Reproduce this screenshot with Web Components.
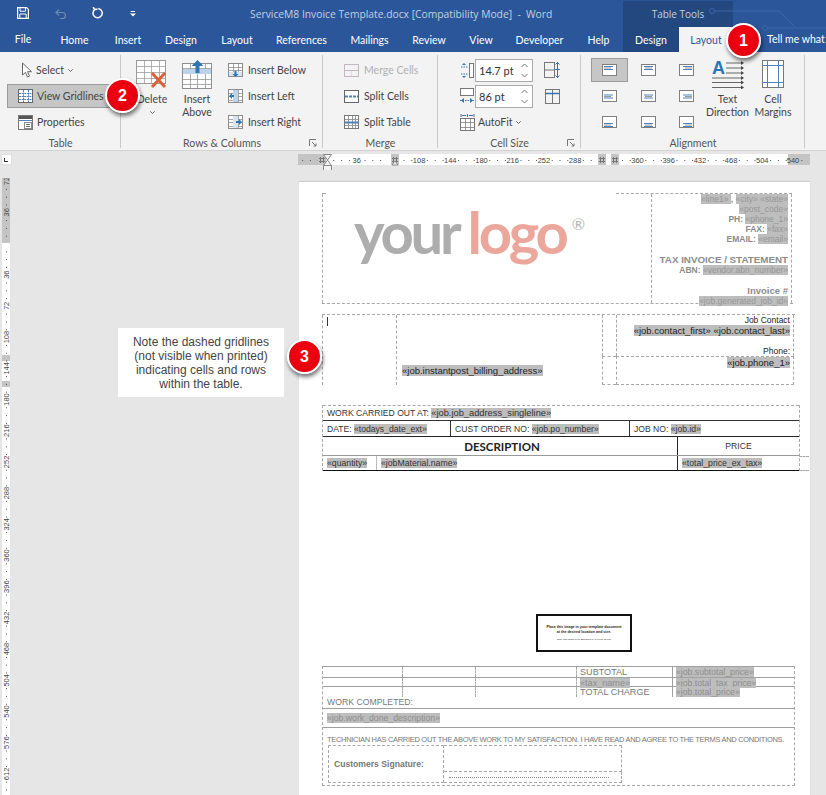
<!DOCTYPE html>
<html lang="en">
<head>
<meta charset="utf-8">
<title>ServiceM8 Invoice Template</title>
<style>
  html, body { margin: 0; height: 100%; overflow: hidden; background: #e6e6e6; }
  body { font-family: "Open Sans", "Liberation Sans", sans-serif; }
</style>
</head>
<body>
<word-app>
  <word-titlebar></word-titlebar>
  <word-tabs>
    <word-tab w="46" strong>File</word-tab>
    <word-tab w="57">Home</word-tab>
    <word-tab w="50">Insert</word-tab>
    <word-tab w="56">Design</word-tab>
    <word-tab w="56">Layout</word-tab>
    <word-tab w="73">References</word-tab>
    <word-tab w="63">Mailings</word-tab>
    <word-tab w="56">Review</word-tab>
    <word-tab w="48">View</word-tab>
    <word-tab w="69">Developer</word-tab>
    <word-tab w="49">Help</word-tab>
    <word-tab w="56" context>Design</word-tab>
    <word-tab w="54" active>Layout</word-tab>
  </word-tabs>

  <word-ribbon>
    <ribbon-group label="Table" w="120" pad="7">
      <ribbon-stack>
        <small-button icon="select" pad="14" label="Select" caret></small-button>
        <small-button icon="gridlines" pad="11" label="View Gridlines" pressed w="103"></small-button>
        <small-button icon="properties" pad="11" label="Properties"></small-button>
      </ribbon-stack>
    </ribbon-group>
    <ribbon-group label="Rows &amp; Columns" w="201" pad="10" launcher>
      <large-button icon="delete" w="42" caret>Delete</large-button>
      <large-button icon="insertAbove" w="42" style="margin-left:3px">Insert<br>Above</large-button>
      <ribbon-stack gap="8">
        <small-button icon="insertBelow" label="Insert Below" pad="2"></small-button>
        <small-button icon="insertLeft" label="Insert Left" pad="2"></small-button>
        <small-button icon="insertRight" label="Insert Right" pad="2"></small-button>
      </ribbon-stack>
    </ribbon-group>
    <ribbon-group label="Merge" w="114" pad="21">
      <ribbon-stack>
        <small-button icon="mergeCells" label="Merge Cells" disabled></small-button>
        <small-button icon="splitCells" label="Split Cells"></small-button>
        <small-button icon="splitTable" label="Split Table"></small-button>
      </ribbon-stack>
    </ribbon-group>
    <ribbon-group label="Cell Size" w="142" pad="22" launcher>
      <cell-size-panel></cell-size-panel>
    </ribbon-group>
    <ribbon-group label="Alignment" w="223" pad="10">
      <align-grid></align-grid>
      <large-button icon="textDirection" w="43" style="margin-left:1px">Text<br>Direction</large-button>
      <large-button icon="cellMargins" w="44" style="margin-left:2px">Cell<br>Margins</large-button>
    </ribbon-group>
  </word-ribbon>

  <word-rulerbar></word-rulerbar>

  <word-workspace>
    <doc-page>
      <invoice-header></invoice-header>
      <invoice-contact></invoice-contact>
      <invoice-lines></invoice-lines>
      <signature-stamp></signature-stamp>
      <invoice-totals></invoice-totals>
    </doc-page>
    <note-box>Note the dashed gridlines<br>(not visible when printed)<br>indicating cells and rows<br>within the table.</note-box>
  </word-workspace>

  <step-badge style="--x:726px;--y:23px">1</step-badge>
  <step-badge style="--x:105px;--y:78px">2</step-badge>
  <step-badge style="--x:287px;--y:339px">3</step-badge>
</word-app>

<script>
const BLUE = '#4f81bd';
const GREY = '#8c8c8c';

// grid of thin lines, used by most of the table icons
function tableLines (x, y, w, h, cols, rows, colour = GREY) {
  let out = `<rect x="${x + .5}" y="${y + .5}" width="${w - 1}" height="${h - 1}" fill="#fff" stroke="${colour}"/>`;
  for (let i = 1; i < cols; i++) {
    const cx = Math.round(x + w * i / cols) + .5;
    out += `<path d="M${cx} ${y}V${y + h}" stroke="${colour}" opacity=".75"/>`;
  }
  for (let i = 1; i < rows; i++) {
    const cy = Math.round(y + h * i / rows) + .5;
    out += `<path d="M${x} ${cy}H${x + w}" stroke="${colour}" opacity=".75"/>`;
  }
  return out;
}

const ICONS = {
  select: [11, 16, `<path d="M1.5 1v12l3-2.6 2 4.6 2-.9-2-4.4h4z" fill="#fff" stroke="#666"/>`],
  gridlines: [15, 14, `<rect x=".5" y=".5" width="14" height="13" fill="#fff" stroke="#666"/>
    <path d="M5.5 1v12M10.5 1v12M1 4.5h13M1 7.5h13M1 10.5h13" stroke="${BLUE}" stroke-dasharray="2 .6"/>`],
  properties: [15, 15, `<rect x=".5" y=".5" width="14" height="14" fill="#fff" stroke="#777"/>
    <rect x="1" y="1" width="13" height="3" fill="#555"/><path d="M1 5.5h13" stroke="${BLUE}"/>
    <rect x="6.5" y="7.5" width="7" height="6" fill="#fff" stroke="#888"/><path d="M8 9.5h4M8 11.5h4" stroke="#666"/>`],
  delete: [32, 32, tableLines(0, 0, 30, 24, 4, 4, '#9a9a9a') +
    `<path d="M16 13l13 14M29 13L16 27" stroke="#d9603b" stroke-width="3" fill="none"/>`],
  insertAbove: [31, 29, `<g transform="translate(0 3)">${tableLines(0, 0, 30, 26, 4, 5, '#8f8f8f')}
    <rect x="1" y="6" width="28" height="5" fill="#bcd3ea"/></g>
    <path d="M15.5 0l6 6h-4v7h-4V6h-4z" fill="#2e75b6"/>`],
  insertBelow: [16, 15, tableLines(0, 0, 15, 14, 3, 4) +
    `<rect x="1" y="9" width="13" height="4" fill="#d5e3f2"/><path d="M6.5 8h2v3h2l-3 3-3-3h2z" fill="#2e75b6"/>`],
  insertLeft: [16, 15, tableLines(0, 0, 15, 14, 3, 4) +
    `<rect x="5" y="1" width="5" height="12" fill="#bcd3ea"/><path d="M1 7l3-3v2h2v2H4v2z" fill="#2e75b6"/>`],
  insertRight: [16, 15, tableLines(0, 0, 15, 14, 3, 4) +
    `<rect x="5" y="1" width="5" height="12" fill="#d5e3f2"/><path d="M14 7l-3-3v2H8v2h3v2z" fill="#2e75b6"/>`],
  mergeCells: [16, 13, `<rect x=".5" y=".5" width="14" height="12" fill="none" stroke="#c4b7bf"/><path d="M1 6.5h13" stroke="#c4b7bf"/><path d="M7.5 7v5" stroke="#e1dbe0"/>`],
  splitCells: [16, 13, `<rect x=".5" y=".5" width="14" height="12" fill="#fff" stroke="#666"/><path d="M1 6.5h13" stroke="${BLUE}" stroke-width="2" stroke-dasharray="3 1"/>`],
  splitTable: [16, 14, tableLines(0, 0, 15, 14, 4, 1, '#777') +
    `<path d="M1 4.5h13" stroke="#999"/><path d="M1 7.5h13" stroke="${BLUE}" stroke-width="2"/><path d="M1 10.5h13" stroke="#999"/>`],
  cellHeight: [14, 17, `<rect x="9.5" y="1.5" width="4" height="14" fill="#fff" stroke="#777"/>
    <path d="M1 5h7M1 12h7" stroke="#2e75b6" stroke-dasharray="1.5 1"/><path d="M4 1l2 2H2zM4 16l2-2H2z" fill="#2e75b6"/>`],
  cellWidth: [14, 16, `<rect x=".5" y=".5" width="13" height="7" fill="#fff" stroke="#777"/>
    <path d="M0 12.5h14" stroke="#2e75b6" stroke-dasharray="1.5 1"/><path d="M1 12.5l3-2.5v5zM13 12.5l-3-2.5v5z" fill="#2e75b6"/>`],
  autoFit: [15, 18, `<g transform="translate(0 5)">${tableLines(0, 0, 15, 13, 3, 3, '#777')}</g>
    <path d="M1 1v3M7.5 1v3M14 1v3" stroke="#666"/><path d="M2 2.5h4M9 2.5h4" stroke="#2e75b6"/>`],
  distRows: [16, 16, `<rect x=".5" y=".5" width="10" height="15" fill="none" stroke="#777"/><path d="M1 8h9" stroke="#777"/>
    <path d="M13.5 0v16M11.5 2.5l2-2 2 2M11.5 13.5l2 2 2-2M11 7.5h5" stroke="#2e75b6" fill="none"/>`],
  distCols: [15, 15, `<rect x=".5" y=".5" width="14" height="14" fill="none" stroke="#777"/><path d="M7.5 1v13" stroke="#777"/><path d="M1 4.5h13" stroke="#2e75b6" stroke-width="1.5"/>`],
  textDirection: [32, 29, `<text x="0" y="14" font-family="Liberation Sans,sans-serif" font-weight="700" font-size="18" fill="#2e75b6">A</text>
    <path d="M14 3h16M14 8h16M14 13h16M0 18h30M0 22.500h30M0 27.500h30" stroke="#666" fill="none"/>
    <path d="M32 3l-3-2v4zM32 8l-3-2v4zM32 13l-3-2v4zM32 18l-3-2v4zM32 22.500l-3-2v4zM32 27.500l-3-2v4z" fill="#444"/>`],
  cellMargins: [22, 28, `<rect x=".5" y=".5" width="21" height="27" fill="#fff" stroke="#777"/>
    <path d="M5.500 1v26M16.500 1v26M1 5.500h20M1 22.500h20" stroke="${BLUE}"/>`]
};

function iconSvg (name) {
  const [w, h, body] = ICONS[name];
  return `<svg width="${w}" height="${h}" viewBox="0 0 ${w} ${h}" style="display:block;flex:none" aria-hidden="true">${body}</svg>`;
}

class WordApp extends HTMLElement {
  constructor () {
    super();
    this.attachShadow({ mode: 'open' });
    this.shadowRoot.innerHTML = `
      <style>
        :host { display: flex; flex-direction: column; position: relative; width: 826px; height: 795px; overflow: hidden; }
      </style>
      <slot></slot>
    `;
  }
}

class WordTitlebar extends HTMLElement {
  constructor () {
    super();
    this.attachShadow({ mode: 'open' });
    this.shadowRoot.innerHTML = `
      <style>
        :host { display: flex; height: 27px; background: #2b579a; color: #c3cfe2; font-size: 10.300px; position: relative; }
        .qat { display: flex; width: 250px; flex: none; align-items: center; padding-left: 17px; box-sizing: border-box; padding-bottom: 1px; }
        .title { width: 373px; flex: none; line-height: 28px; white-space: pre; }
        .tools { width: 110px; flex: none; margin-top: 1px; background: #23477f; text-align: center; line-height: 26px; font-size: 10px; }
        svg.circuit { position: absolute; left: 705px; top: 0; }
      </style>
      <div class="qat">
        <svg width="12" height="12" viewBox="0 0 12 12" fill="none" stroke="#fff" stroke-width="1.200"><path d="M.6.6h9l1.800 1.800v9H.6z"/><path d="M3 .8v3.400h5.500V.8M2.800 11.200V7h6.400v4.200" stroke-width="1"/></svg>
        <svg style="margin-left:26px" width="12" height="11" viewBox="0 0 12 11" fill="none" stroke="#6e8ab8" stroke-width="1.200"><path d="M1.500 4.500h6a3 3 0 010 6H5M4 1.500l-3 3 3 3"/></svg>
        <svg style="margin-left:25px" width="12" height="12" viewBox="0 0 12 12" fill="none" stroke="#fff" stroke-width="1.500"><path d="M7 1.800a4.600 4.600 0 11-4 .6M1.500 .5l1 2.200 2.200-.6" stroke-linecap="square"/></svg>
        <svg style="margin-left:26px" width="6" height="7" viewBox="0 0 6 7"><path d="M.5 1.500h4.500" stroke="#fff"/><path d="M0 3.500h6L3 6.500z" fill="#fff"/></svg>
      </div>
      <div class="title">ServiceM8 Invoice Template.docx [Compatibility Mode]  -  Word</div>
      <div class="tools">Table Tools</div>
      <svg class="circuit" width="121" height="52" viewBox="0 0 121 52" fill="none" stroke="#3d66a6">
        <circle cx="7" cy="11" r="2.500"/><path d="M10 11h64M74 11l16 16"/>
        <circle cx="60" cy="28" r="2.500"/><path d="M63 28h58"/>
      </svg>
    `;
  }
}

class WordTabs extends HTMLElement {
  constructor () {
    super();
    this.attachShadow({ mode: 'open' });
    this.shadowRoot.innerHTML = `
      <style>
        :host { display: flex; height: 25px; background: #2b579a; overflow: hidden; font-family: Lato, "Open Sans", sans-serif; font-size: 10.500px; }
        .tell { padding-left: 34px; color: #fff; line-height: 24px; white-space: nowrap; }
      </style>
      <slot></slot>
      <div class="tell">Tell me what you want</div>
    `;
  }
}

class WordTab extends HTMLElement {
  constructor () {
    super();
    this.attachShadow({ mode: 'open' });
    this.shadowRoot.innerHTML = `
      <style>
        :host { display: block; flex: none; box-sizing: border-box; text-align: center; color: #fff; line-height: 26px; }
        :host([context]) { background: #23477f; }
        :host([active]) { background: #f3f3f3; color: #2b579a; }
        :host([strong]) { line-height: 24px; }
      </style>
      <slot></slot>
    `;
  }
  connectedCallback () {
    this.style.width = this.getAttribute('w') + 'px';
  }
}

class WordRibbon extends HTMLElement {
  constructor () {
    super();
    this.attachShadow({ mode: 'open' });
    this.shadowRoot.innerHTML = `
      <style>
        :host { display: flex; height: 98px; background: #f3f3f3; border-bottom: 1px solid #d2d2d2; color: #444; font-family: Lato, "Open Sans", sans-serif; font-size: 10.500px; }
      </style>
      <slot></slot>
    `;
  }
}

class RibbonGroup extends HTMLElement {
  constructor () {
    super();
    this.attachShadow({ mode: 'open' });
    this.shadowRoot.innerHTML = `
      <style>
        :host { display: flex; flex-direction: column; flex: none; position: relative; box-sizing: border-box; }
        :host::after { content: ""; position: absolute; right: 0; top: 3px; bottom: 2px; width: 1px; background: #c9c9c9; }
        .body { display: flex; flex: 1; padding-top: 6px; box-sizing: border-box; min-height: 0; }
        .label { height: 15px; line-height: 17px; text-align: center; position: relative; color: #555; }
        .launcher { position: absolute; right: 6px; top: 4px; }
      </style>
      <div class="body"><slot></slot></div>
      <div class="label"></div>
    `;
  }
  connectedCallback () {
    this.style.width = (+this.getAttribute('w') + 1) + 'px';
    this.shadowRoot.querySelector('.body').style.paddingLeft = this.getAttribute('pad') + 'px';
    const label = this.shadowRoot.querySelector('.label');
    label.textContent = this.getAttribute('label');
    if (this.hasAttribute('launcher')) {
      label.insertAdjacentHTML('beforeend', `<svg class="launcher" width="8" height="8" viewBox="0 0 8 8" fill="none" stroke="#777"><path d="M.5 7V.5H7"/><path d="M3 3l4 4M7 4.500V7H4.500"/></svg>`);
    }
  }
}

class RibbonStack extends HTMLElement {
  constructor () {
    super();
    this.attachShadow({ mode: 'open' });
    this.shadowRoot.innerHTML = `
      <style>
        :host { display: flex; flex-direction: column; gap: 2px; flex: none; }
      </style>
      <slot></slot>
    `;
  }
  connectedCallback () {
    if (this.hasAttribute('gap')) this.style.marginLeft = this.getAttribute('gap') + 'px';
  }
}

class SmallButton extends HTMLElement {
  constructor () {
    super();
    this.attachShadow({ mode: 'open' });
    this.shadowRoot.innerHTML = `
      <style>
        :host { display: flex; align-items: center; height: 24px; box-sizing: border-box; white-space: nowrap; }
        :host([pressed]) { background: #c6c6c6; box-shadow: inset 0 0 0 1px #9b9b9b; }
        :host([disabled]) { color: #b1b1b1; }
        .icon { flex: none; margin-right: 4px; }
        .wrap { display: flex; align-items: center; }
        .caret { margin-left: 4px; }
      </style>
      <div class="wrap"><span class="icon"></span><span class="text"></span></div>
    `;
  }
  connectedCallback () {
    const root = this.shadowRoot;
    root.querySelector('.icon').innerHTML = iconSvg(this.getAttribute('icon'));
    root.querySelector('.text').textContent = this.getAttribute('label');
    root.querySelector('.wrap').style.paddingLeft = (this.getAttribute('pad') || 0) + 'px';
    if (this.hasAttribute('w')) this.style.width = this.getAttribute('w') + 'px';
    if (this.hasAttribute('caret')) {
      root.querySelector('.wrap').insertAdjacentHTML('beforeend', `<svg class="caret" width="5" height="3" viewBox="0 0 5 3" fill="none" stroke="#666"><path d="M.3.3l2.200 2.200L4.700.3"/></svg>`);
    }
  }
}

class LargeButton extends HTMLElement {
  constructor () {
    super();
    this.attachShadow({ mode: 'open' });
    this.shadowRoot.innerHTML = `
      <style>
        :host { display: flex; flex-direction: column; align-items: center; flex: none; text-align: center; line-height: 13px; }
        .icon { height: 35px; padding-top: 2px; box-sizing: border-box; }
        .caret { margin-top: 5px; }
      </style>
      <div class="icon"></div>
      <div><slot></slot></div>
    `;
  }
  connectedCallback () {
    const root = this.shadowRoot;
    root.querySelector('.icon').innerHTML = iconSvg(this.getAttribute('icon'));
    this.style.width = this.getAttribute('w') + 'px';
    if (this.hasAttribute('caret')) {
      root.querySelector('div:last-of-type').insertAdjacentHTML('afterend', `<svg class="caret" width="5" height="3" viewBox="0 0 5 3" fill="none" stroke="#666"><path d="M.3.3l2.200 2.200L4.700.3"/></svg>`);
    }
  }
}

class CellSizePanel extends HTMLElement {
  constructor () {
    super();
    this.attachShadow({ mode: 'open' });
    const spin = value => `
      <div class="spin"><span>${value}</span>
        <svg width="7" height="15" viewBox="0 0 7 15" fill="none" stroke="#777"><path d="M.5 4l3-3 3 3M.5 11l3 3 3-3"/></svg>
      </div>`;
    this.shadowRoot.innerHTML = `
      <style>
        :host { display: grid; grid-template-columns: 15px 58px 27px; grid-auto-rows: 24px; row-gap: 2px; align-items: center; }
        .spin { display: flex; align-items: center; justify-content: space-between; height: 23px; box-sizing: border-box; padding: 0 4px 0 3px; background: #fff; border: 1px solid #ababab; font-size: 11px; color: #333; }
        .dist { justify-self: end; }
        .auto { grid-column: 1 / 4; display: flex; align-items: center; gap: 3px; }
      </style>
      <div>${iconSvg('cellHeight')}</div>${spin('14.7 pt')}<div class="dist">${iconSvg('distRows')}</div>
      <div>${iconSvg('cellWidth')}</div>${spin('86 pt')}<div class="dist">${iconSvg('distCols')}</div>
      <div class="auto">${iconSvg('autoFit')}<span>AutoFit</span>
        <svg width="5" height="3" viewBox="0 0 5 3" fill="none" stroke="#666"><path d="M.3.3l2.200 2.200L4.700.3"/></svg>
      </div>
    `;
  }
}

class AlignGrid extends HTMLElement {
  constructor () {
    super();
    this.attachShadow({ mode: 'open' });
    let cells = '';
    for (let row = 0; row < 3; row++) {
      for (let col = 0; col < 3; col++) {
        cells += `<div class="cell${row + col === 0 ? ' on' : ''}">${this.glyph(row, col)}</div>`;
      }
    }
    this.shadowRoot.innerHTML = `
      <style>
        :host { display: grid; grid-template-columns: repeat(3, 37px); grid-auto-rows: 24px; column-gap: 1.5px; row-gap: 2px; flex: none; }
        .cell { display: flex; align-items: center; justify-content: center; box-sizing: border-box; }
        .on { background: #c6c6c6; border: 1px solid #9b9b9b; }
      </style>
      ${cells}
    `;
  }
  glyph (row, col) {
    const y = [2, 4.5, 7][row];
    const widths = [9, 7, 9];
    let lines = '';
    widths.forEach((w, i) => {
      const x = col === 0 ? 2 : col === 1 ? (15 - w) / 2 : 13 - w;
      lines += `<rect x="${x}" y="${y + i * 1.500}" width="${w}" height="1" fill="${i === 1 ? '#9a9a9a' : BLUE}"/>`;
    });
    return `<svg width="15" height="12" viewBox="0 0 15 12" style="display:block"><rect x=".5" y=".5" width="14" height="11" fill="#fff" stroke="#7f7f7f"/>${lines}</svg>`;
  }
}

class WordRulerbar extends HTMLElement {
  constructor () {
    super();
    this.attachShadow({ mode: 'open' });
    let marks = '';
    // four small dots per 36pt label, same pitch as the page scale
    for (let i = -3; i < 62; i++) {
      const x = 27.500 + i * 7.800;
      if (i % 4 === 0) {
        if (i > 0 && i !== 8 && i !== 36 && i !== 60) {
          marks += `<text x="${x}" y="8.500" text-anchor="middle">${i * 9}</text>`;
        }
      } else {
        marks += `<rect x="${x}" y="6" width="1" height="1" fill="#555"/>`;
      }
    }
    const hatch = x => `<rect x="${x}" y="0" width="8" height="11" fill="#c4c4c4"/><path d="M${x + 2.500} 3v6M${x + 5.500} 3v6M${x + 1} 4.500h6M${x + 1} 7.500h6" stroke="#777"/>`;
    this.shadowRoot.innerHTML = `
      <style>
        :host { display: flex; height: 19px; background: #e6e6e6; flex: none; }
        .corner { width: 9px; height: 9px; margin: 4px 0 0 2px; background: #fff; box-shadow: 0 0 0 1px #e0e0e0; position: relative; }
        .corner::after { content: ""; position: absolute; left: 2px; top: 3px; width: 3px; height: 3px; border: solid #333; border-width: 0 0 1px 1px; }
        svg { margin: 3px 0 0 287px; overflow: visible; font: 7.500px "Liberation Sans", sans-serif; fill: #444; }
      </style>
      <div class="corner"></div>
      <svg width="514" height="16" viewBox="0 0 514 16">
        <rect x="0" y="0" width="512" height="11" fill="#fff"/>
        <rect x="0" y="0" width="27" height="11" fill="#c4c4c4"/>
        <rect x="490" y="0" width="22" height="11" fill="#c4c4c4"/>
        ${marks}
        <text x="495" y="8.500" text-anchor="middle">540</text>
        ${hatch(20)}${hatch(93)}${hatch(300)}${hatch(313)}
        <path d="M25.500 .5h8l-4 5.500zM25.500 11.500h8l-4-5.500z" fill="#f3f3f3" stroke="#888"/>
        <rect x="25.500" y="11.500" width="8" height="5" fill="#f3f3f3" stroke="#888"/>
        <path d="M94 11h6l-3-4z" fill="#f3f3f3" stroke="#888"/>
      </svg>
    `;
  }
}

class WordWorkspace extends HTMLElement {
  constructor () {
    super();
    this.attachShadow({ mode: 'open' });
    let marks = '';
    for (let k = -2; k <= 17; k++) {
      const y = 65.500 + 31.200 * k;
      if (k !== 0) {
        marks += `<text transform="translate(8 ${y}) rotate(-90)" text-anchor="middle">${Math.abs(k) * 36}</text>`;
      }
      for (let d = 1; d < 4; d++) {
        marks += `<rect x="5" y="${y + d * 7.800}" width="1" height="1" fill="#555"/>`;
      }
    }
    this.shadowRoot.innerHTML = `
      <style>
        :host { display: flex; flex: 1; min-height: 0; position: relative; background: #e6e6e6; }
        .vruler { width: 299px; flex: none; }
        svg { display: block; margin: 8px 0 0 1px; font: 7.500px "Liberation Sans", sans-serif; fill: #444; }
      </style>
      <div class="vruler">
        <svg width="10" height="617" viewBox="0 0 10 617">
          <rect x="1" width="8" height="617" fill="#fff"/>
          <rect x="1" width="8" height="65" fill="#c4c4c4"/>
          <rect x="1" y="177" width="8" height="6" fill="#c4c4c4"/>
          <rect x="1" y="203" width="8" height="6" fill="#c4c4c4"/>
          ${marks}
        </svg>
      </div>
      <slot></slot>
    `;
  }
}

class DocPage extends HTMLElement {
  constructor () {
    super();
    this.attachShadow({ mode: 'open' });
    this.shadowRoot.innerHTML = `
      <style>
        :host { display: flex; flex-direction: column; width: 511px; margin-top: 11px; padding: 11px 0 0 23px; box-sizing: border-box; flex: none; background: #fff; border-top: 1px solid #cfcfcf; box-shadow: 0 0 1px #c8c8c8; font-family: "Liberation Sans", Arial, sans-serif; overflow: hidden; }
      </style>
      <slot></slot>
    `;
  }
}

class MergeField extends HTMLElement {
  constructor () {
    super();
    this.attachShadow({ mode: 'open' });
    this.shadowRoot.innerHTML = `
      <style>
        :host { background: #bdbdbd; font-weight: 400; }
      </style>
      <slot></slot>
    `;
  }
}

class InvoiceHeader extends HTMLElement {
  constructor () {
    super();
    this.attachShadow({ mode: 'open' });
    this.shadowRoot.innerHTML = `
      <style>
        :host { display: grid; grid-template-columns: 329px 141px; grid-template-rows: 1px 109px; width: 471px; flex: none; box-sizing: border-box; border-bottom: 1px dashed #a8a8a8; }
        .top { grid-column: 1 / 3; display: flex; }
        .dash { border-top: 1px dashed #a8a8a8; }
        .logo { box-sizing: border-box; border-left: 1px dashed #a8a8a8; padding: 9px 0 0 31px; font: 700 58px/58px Lato, "Open Sans", sans-serif; letter-spacing: -3.200px; white-space: nowrap; }
        .your { color: #adadad; }
        .brand { color: #eca79d; margin-left: 9px; }
        sup { font-size: 16px; font-weight: 400; color: #b5b5b5; vertical-align: 24px; line-height: 0; letter-spacing: 0; margin-left: 6px; }
        .info { border-left: 1px dashed #a8a8a8; border-right: 1px dashed #a8a8a8; text-align: right; padding-right: 3px; color: #8b8b8b; font-size: 8.500px; font-weight: 700; line-height: 10px; white-space: nowrap; }
        .big { font-size: 9.800px; line-height: 11px; }
        .gap { height: 10px; }
        .gap2 { height: 11px; }
        merge-field { color: #979797; }
      </style>
      <div class="top"><div class="dash" style="width:4px"></div><div class="dash" style="margin-left:290px;width:176px"></div></div>
      <div class="logo"><span class="your">your</span><span class="brand">logo</span><sup>®</sup></div>
      <div class="info">
        <div><merge-field>«line1»</merge-field>, <merge-field>«city»</merge-field> <merge-field>«state»</merge-field></div>
        <div><merge-field>«post_code»</merge-field></div>
        <div>PH: <merge-field>«phone_1»</merge-field></div>
        <div>FAX: <merge-field>«fax»</merge-field></div>
        <div>EMAIL: <merge-field>«email»</merge-field></div>
        <div class="gap"></div>
        <div class="big">TAX INVOICE / STATEMENT</div>
        <div>ABN: <merge-field>«vendor.abn_number»</merge-field></div>
        <div class="gap2"></div>
        <div class="big" style="font-size:9.500px;line-height:10px">Invoice #</div>
        <div><merge-field>«job.generated_job_id»</merge-field></div>
      </div>
    `;
  }
}

class InvoiceContact extends HTMLElement {
  constructor () {
    super();
    this.attachShadow({ mode: 'open' });
    this.shadowRoot.innerHTML = `
      <style>
        :host { display: grid; grid-template-columns: 74px 206px 14px 178px; grid-template-rows: 41px 29px; width: 473px; margin-top: 10px; flex: none; font-size: 9.500px; color: #222; border-top: 1px dashed #a8a8a8; white-space: nowrap; }
        .a, .b { grid-row: 1 / 3; border-left: 1px dashed #a8a8a8; }
        .a { padding: 2px 0 0 4px; }
        .caret { width: 1px; height: 9px; background: #333; }
        .b { display: flex; align-items: flex-end; padding: 0 0 9px 5px; }
        .c, .d, .e, .f { border-left: 1px dashed #a8a8a8; }
        .d, .f { border-right: 1px dashed #a8a8a8; text-align: right; padding-right: 3px; }
        .d { line-height: 10px; }
        .e, .f { border-top: 1px dashed #a8a8a8; border-bottom: 1px dashed #a8a8a8; }
        .f { line-height: 11px; }
        .small { font-size: 8.500px; }
      </style>
      <div class="a"><div class="caret"></div></div>
      <div class="b"><merge-field>«job.instantpost_billing_address»</merge-field></div>
      <div class="c"></div>
      <div class="d">
        <div class="small">Job Contact</div>
        <div style="line-height:12px"><merge-field>«job.contact_first»</merge-field> <merge-field>«job.contact_last»</merge-field></div>
        <div style="height:9px"></div>
        <div class="small">Phone:</div>
      </div>
      <div class="e"></div>
      <div class="f"><merge-field>«job.phone_1»</merge-field></div>
    `;
  }
}

class InvoiceLines extends HTMLElement {
  constructor () {
    super();
    this.attachShadow({ mode: 'open' });
    this.shadowRoot.innerHTML = `
      <style>
        :host { display: block; width: 478px; margin-top: 20px; flex: none; font-size: 8.600px; color: #333; white-space: nowrap; border-left: 1px dashed #a8a8a8; border-right: 1px dashed #a8a8a8; box-sizing: border-box; }
        .row { display: grid; align-items: center; box-sizing: border-box; }
        .row > div { padding-left: 4px; height: 100%; display: flex; align-items: center; box-sizing: border-box; }
        .r1 { height: 16px; border-top: 1px dashed #a8a8a8; border-bottom: 1px solid #333; }
        .r2 { height: 16px; grid-template-columns: 127px 179px 1fr; border-bottom: 1px solid #222; }
        .r2 > div + div { border-left: 1px solid #333; }
        .r3 { height: 19px; grid-template-columns: 354px 1fr; border-bottom: 1px solid #999; }
        .r3 > div + div { border-left: 1px solid #222; justify-content: center; padding-left: 0; }
        .desc { font: 700 11.500px Lato, "Open Sans", sans-serif; justify-content: center; color: #222; }
        .r4 { height: 15px; grid-template-columns: 53px 301px 1fr; border-bottom: 1px solid #111; font-size: 8.700px; position: relative; }
        .r4 > div + div { border-left: 1px solid #bbb; }
        .r4 > div:last-child { border-left-color: #222; }
        .r4::before, .r4::after { content: ""; position: absolute; left: 100%; width: 10px; border-top: 1px dashed #a8a8a8; }
        .r4::before { top: 0; }
        .r4::after { bottom: -1px; }
        .wide { font-size: 9.300px; }
      </style>
      <div class="row r1"><div>WORK CARRIED OUT AT:&nbsp;<merge-field class="wide">«job.job_address_singleline»</merge-field></div></div>
      <div class="row r2">
        <div>DATE:&nbsp;<merge-field>«todays_date_ext»</merge-field></div>
        <div>CUST ORDER NO:&nbsp;<merge-field>«job.po_number»</merge-field></div>
        <div>JOB NO:&nbsp;<merge-field>«job.id»</merge-field></div>
      </div>
      <div class="row r3"><div class="desc">DESCRIPTION</div><div>PRICE</div></div>
      <div class="row r4">
        <div><merge-field>«quantity»</merge-field></div>
        <div><merge-field>«jobMaterial.name»</merge-field></div>
        <div><merge-field>«total_price_ex_tax»</merge-field></div>
      </div>
    `;
  }
}

class SignatureStamp extends HTMLElement {
  constructor () {
    super();
    this.attachShadow({ mode: 'open' });
    this.shadowRoot.innerHTML = `
      <style>
        :host { display: flex; flex-direction: column; align-items: center; justify-content: center; width: 96px; height: 38px; margin: 143px 0 14px 214px; box-sizing: border-box; flex: none; border: 2px solid #111; background: #fff; color: #222; text-align: center; font-size: 3.600px; font-weight: 700; line-height: 5px; white-space: nowrap; }
        .fine { font-size: 2.400px; font-weight: 400; margin-top: 3px; line-height: 3px; }
      </style>
      <div>Place this image in your template document<br>at the desired location and size.</div>
      <div class="fine">Note: this image is for Shopping or 'In Field' Of Use</div>
    `;
  }
}

class InvoiceTotals extends HTMLElement {
  constructor () {
    super();
    this.attachShadow({ mode: 'open' });
    const row = (label, field, cls) => `
      <div class="row ${cls}">
        <div></div><div></div><div></div>
        <div>${label}</div>
        <div><merge-field>${field}</merge-field></div>
      </div>`;
    this.shadowRoot.innerHTML = `
      <style>
        :host { display: block; width: 473px; flex: none; box-sizing: border-box; padding-bottom: 2px; color: #777; font-size: 8.700px; line-height: 10px; white-space: nowrap; border-left: 1px dashed #a8a8a8; border-right: 1px dashed #a8a8a8; border-bottom: 1px dashed #a8a8a8; }
        merge-field { color: #8e8e8e; }
        .row { display: grid; grid-template-columns: 79px 73px 101px 96px 1fr; box-sizing: border-box; height: 11px; border-top: 1px solid #a0a0a0; }
        .row > div + div { border-left: 1px dashed #a8a8a8; padding-left: 3px; }
        .row > div:nth-child(4) { font-size: 9.100px; }
        .row:nth-child(3) { height: 9px; }
        .row > div:last-child { border-left-style: solid; border-left-color: #a0a0a0; }
        .label { height: 11px; padding-left: 4px; box-sizing: border-box; }
        .work { height: 18px; padding-left: 4px; border-top: 1px solid #a0a0a0; border-bottom: 1px solid #a0a0a0; display: flex; align-items: center; }
        .terms { padding: 7px 0 0 4px; font-size: 7.500px; letter-spacing: -.3px; }
        .sig { display: grid; grid-template-columns: 116px 178px; grid-template-rows: 27px 11px; margin: 0 0 0 5px; width: 295px; font-size: 8.600px; font-weight: 700; }
        .who { grid-row: 1 / 3; display: flex; align-items: center; padding-left: 5px; border: 1px dashed #a8a8a8; box-sizing: border-box; }
        .line { border: 1px dashed #a8a8a8; border-left: 0; box-sizing: border-box; }
        .line2 { border-right: 1px dashed #a8a8a8; border-bottom: 1px dashed #a8a8a8; box-sizing: border-box; padding: 5px 12px 0 5px; }
        .dots { border-top: 1px dotted #888; }
      </style>
      ${row('SUBTOTAL', '«job.subtotal_price»', 'one')}
      ${row('<merge-field>«tax_name»</merge-field>', '«job.total_tax_price»', 'two')}
      ${row('TOTAL CHARGE', '«job.total_price»', 'three')}
      <div class="label">WORK COMPLETED:</div>
      <div class="work"><merge-field>«job.work_done_description»</merge-field></div>
      <div class="terms">TECHNICIAN HAS CARRIED OUT THE ABOVE WORK TO MY SATISFACTION. I HAVE READ AND AGREE TO THE TERMS AND CONDITIONS.</div>
      <div class="sig">
        <div class="who">Customers Signature:</div>
        <div class="line"></div>
        <div class="line2"><div class="dots"></div></div>
      </div>
    `;
  }
}

class NoteBox extends HTMLElement {
  constructor () {
    super();
    this.attachShadow({ mode: 'open' });
    this.shadowRoot.innerHTML = `
      <style>
        :host { position: absolute; left: 118px; top: 158px; width: 166px; height: 69px; box-sizing: border-box; display: flex; align-items: center; justify-content: center; background: #fff; color: #444; font: 12px/14px "Liberation Sans", Arial, sans-serif; text-align: center; }
      </style>
      <div><slot></slot></div>
    `;
  }
}

class StepBadge extends HTMLElement {
  constructor () {
    super();
    this.attachShadow({ mode: 'open' });
    this.shadowRoot.innerHTML = `
      <style>
        :host { position: absolute; left: var(--x); top: var(--y); width: 35px; height: 35px; box-sizing: border-box; display: flex; align-items: center; justify-content: center; border-radius: 50%; border: 2px solid #fff; background: radial-gradient(circle at 50% 40%, #f50010, #dd0010); color: #fff; font: 700 16px "Liberation Sans", Arial, sans-serif; box-shadow: 1px 3px 4px rgba(0, 0, 0, .55); }
      </style>
      <slot></slot>
    `;
  }
}

customElements.define('word-app', WordApp);
customElements.define('word-titlebar', WordTitlebar);
customElements.define('word-tabs', WordTabs);
customElements.define('word-tab', WordTab);
customElements.define('word-ribbon', WordRibbon);
customElements.define('ribbon-group', RibbonGroup);
customElements.define('ribbon-stack', RibbonStack);
customElements.define('small-button', SmallButton);
customElements.define('large-button', LargeButton);
customElements.define('cell-size-panel', CellSizePanel);
customElements.define('align-grid', AlignGrid);
customElements.define('word-rulerbar', WordRulerbar);
customElements.define('word-workspace', WordWorkspace);
customElements.define('doc-page', DocPage);
customElements.define('merge-field', MergeField);
customElements.define('invoice-header', InvoiceHeader);
customElements.define('invoice-contact', InvoiceContact);
customElements.define('invoice-lines', InvoiceLines);
customElements.define('signature-stamp', SignatureStamp);
customElements.define('invoice-totals', InvoiceTotals);
customElements.define('note-box', NoteBox);
customElements.define('step-badge', StepBadge);
</script>
</body>
</html>
